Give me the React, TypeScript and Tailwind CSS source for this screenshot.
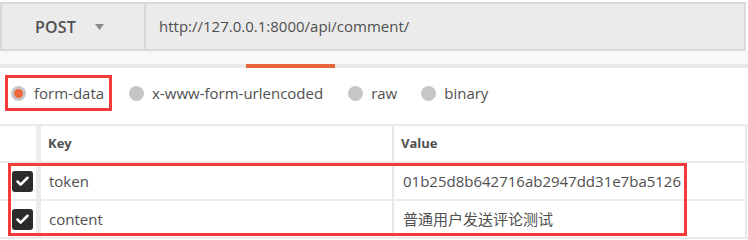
import { Check } from 'lucide-react';

const rows = [
  { key: 'token', value: '01b25d8b642716ab2947dd31e7ba5126' },
  { key: 'content', value: '普通用户发送评论测试' },
];

function Radio({ active = false }: { active?: boolean }) {
  return (
    <span className="w-[15px] h-[15px] rounded-full bg-[#c6c6c6] flex items-center justify-center shrink-0">
      {active && <span className="w-[9px] h-[9px] rounded-full bg-[#f0683a]" />}
    </span>
  );
}

function Checkbox() {
  return (
    <span className="w-[21px] h-[21px] rounded-[3px] bg-[#2b2b2b] flex items-center justify-center">
      <Check className="w-[15px] h-[15px] text-white" strokeWidth={4} />
    </span>
  );
}

export default function App() {
  return (
    <div
      className="w-[748px] h-[239px] bg-white overflow-hidden text-[#505050]"
      style={{ fontFamily: '"Open Sans", "Noto Sans CJK SC", sans-serif' }}
    >
      {/* Request bar */}
      <div className="pt-[2px]">
        <div className="w-[746px] h-[49px] flex bg-[#ebebeb] border-2 border-[#d9d9d9]">
          <div className="w-[144px] flex items-center pl-[33px] border-r-2 border-[#d9d9d9]">
            <span className="text-[16px] font-semibold tracking-[0.2px]">POST</span>
            <svg className="ml-[19px]" width="9" height="6" viewBox="0 0 9 6">
              <path d="M0 0 L9 0 L4.5 6 Z" fill="#8a8a8a" />
            </svg>
          </div>
          <div className="flex-1 flex items-center pl-[13px] text-[15px]">
            http://127.0.0.1:8000/api/comment/
          </div>
        </div>
      </div>

      {/* Tabs strip */}
      <div className="h-[13px] bg-[#f8f8f8]" />
      <div className="h-[4px] bg-[#e9e9e9] flex">
        <div className="w-[246px]" />
        <div className="w-[89px] bg-[#e8643a]" />
      </div>

      {/* Body type radios */}
      <div className="h-[56px] flex items-start pt-[7px] pl-[5px] text-[15px]">
        <div className="h-[36px] flex items-center border-[3px] border-[#f23b3b] pl-[3px] pr-[5px] gap-[8px]">
          <Radio active />
          <span>form-data</span>
        </div>
        <div className="h-[36px] flex items-center gap-[8px] ml-[17px]">
          <Radio />
          <span>x-www-form-urlencoded</span>
        </div>
        <div className="h-[36px] flex items-center gap-[8px] ml-[25px]">
          <Radio />
          <span>raw</span>
        </div>
        <div className="h-[36px] flex items-center gap-[8px] ml-[24px]">
          <Radio />
          <span>binary</span>
        </div>
      </div>

      {/* Table */}
      <div className="border-t-2 border-[#ebebeb]">
        <div className="flex h-[37px] border-b-2 border-[#ebebeb] text-[13px] font-bold">
          <div className="w-[36px]" />
          <div className="w-[5px] bg-[#ececec]" />
          <div className="w-[351px] flex items-center pl-[7px]">Key</div>
          <div className="w-[2px] bg-[#e8e8e8]" />
          <div className="w-[351px] flex items-center pl-[7px]">Value</div>
          <div className="w-[2px] bg-[#e8e8e8]" />
        </div>
        <div className="relative">
          {rows.map((row) => (
            <div key={row.key} className="flex h-[38px] border-b-2 border-[#ebebeb] text-[15px]">
              <div className="w-[36px] flex items-center justify-end pr-[3px]">
                <Checkbox />
              </div>
              <div className="w-[5px] bg-[#ececec]" />
              <div className="w-[351px] flex items-center pl-[8px]">{row.key}</div>
              <div className="w-[2px] bg-[#e8e8e8]" />
              <div className="w-[351px] flex items-center pl-[9px]">{row.value}</div>
              <div className="w-[2px] bg-[#e8e8e8]" />
            </div>
          ))}
          <div className="absolute left-[8px] top-0 w-[679px] h-[73px] border-[3px] border-[#f23b3b]" />
        </div>
      </div>
    </div>
  );
}
